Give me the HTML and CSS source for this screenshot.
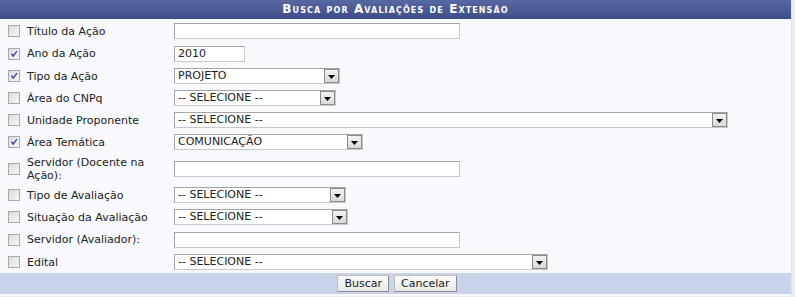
FILE: index.html
```html
<!DOCTYPE html>
<html lang="pt-BR">
<head>
<meta charset="utf-8">
<title>Busca por Avaliações de Extensão</title>
<link rel="stylesheet" href="styles.css">
</head>
<body>
<div class="panel">
  <div class="caption">Busca por Avaliações de Extensão</div>
  <div class="rows">
    <div class="row">
      <span class="cb"></span><span class="lbl">Título da Ação</span>
      <span class="field"><span class="txt w286"></span></span>
    </div>
    <div class="row tall">
      <span class="cb on"><svg viewBox="0 0 12 12"><path d="M3 5.5 L5 8.5 L9.5 2.5" fill="none" stroke="#2b3f9c" stroke-width="1.6"/></svg></span><span class="lbl">Ano da Ação</span>
      <span class="field"><span class="txt w71">2010</span></span>
    </div>
    <div class="row">
      <span class="cb on"><svg viewBox="0 0 12 12"><path d="M3 5.5 L5 8.5 L9.5 2.5" fill="none" stroke="#2b3f9c" stroke-width="1.6"/></svg></span><span class="lbl">Tipo da Ação</span>
      <span class="field"><span class="sel w166"><span class="val">PROJETO</span><span class="arr"><svg viewBox="0 0 7 4"><path d="M0 0H7L3.5 4Z"/></svg></span></span></span>
    </div>
    <div class="row">
      <span class="cb"></span><span class="lbl">Área do CNPq</span>
      <span class="field"><span class="sel w162"><span class="val">-- SELECIONE --</span><span class="arr"><svg viewBox="0 0 7 4"><path d="M0 0H7L3.5 4Z"/></svg></span></span></span>
    </div>
    <div class="row">
      <span class="cb"></span><span class="lbl">Unidade Proponente</span>
      <span class="field"><span class="sel w554"><span class="val">-- SELECIONE --</span><span class="arr"><svg viewBox="0 0 7 4"><path d="M0 0H7L3.5 4Z"/></svg></span></span></span>
    </div>
    <div class="row">
      <span class="cb on"><svg viewBox="0 0 12 12"><path d="M3 5.5 L5 8.5 L9.5 2.5" fill="none" stroke="#2b3f9c" stroke-width="1.6"/></svg></span><span class="lbl">Área Temática</span>
      <span class="field"><span class="sel w189"><span class="val">COMUNICAÇÃO</span><span class="arr"><svg viewBox="0 0 7 4"><path d="M0 0H7L3.5 4Z"/></svg></span></span></span>
    </div>
    <div class="row two">
      <span class="cb"></span><span class="lbl">Servidor (Docente na Ação):</span>
      <span class="field"><span class="txt w286"></span></span>
    </div>
    <div class="row">
      <span class="cb"></span><span class="lbl">Tipo de Avaliação</span>
      <span class="field"><span class="sel w172"><span class="val">-- SELECIONE --</span><span class="arr"><svg viewBox="0 0 7 4"><path d="M0 0H7L3.5 4Z"/></svg></span></span></span>
    </div>
    <div class="row">
      <span class="cb"></span><span class="lbl">Situação da Avaliação</span>
      <span class="field"><span class="sel w174"><span class="val">-- SELECIONE --</span><span class="arr"><svg viewBox="0 0 7 4"><path d="M0 0H7L3.5 4Z"/></svg></span></span></span>
    </div>
    <div class="row tall">
      <span class="cb"></span><span class="lbl">Servidor (Avaliador):</span>
      <span class="field"><span class="txt w286"></span></span>
    </div>
    <div class="row">
      <span class="cb"></span><span class="lbl">Edital</span>
      <span class="field"><span class="sel w374"><span class="val">-- SELECIONE --</span><span class="arr"><svg viewBox="0 0 7 4"><path d="M0 0H7L3.5 4Z"/></svg></span></span></span>
    </div>
  </div>
  <div class="footer">
    <span class="btn">Buscar</span><span class="btn">Cancelar</span>
  </div>
</div>
</body>
</html>
```
FILE: styles.css
```css
* { box-sizing: border-box; }
html, body { margin: 0; padding: 0; }
body {
  background: #eceef2;
  font-family: "DejaVu Sans", Verdana, sans-serif;
  font-size: 11px;
  color: #222;
  width: 795px;
  height: 297px;
  overflow: hidden;
}
.panel {
  width: 792px;
  background: #f8f9fc;
  border-right: 1px solid #e2e4ea;
  padding-bottom: 2px;
}
.caption {
  height: 19px;
  background: linear-gradient(#5768a2, #3d4d87);
  color: #fff;
  font-weight: bold;
  font-variant: small-caps;
  letter-spacing: 1.1px;
  text-align: center;
  line-height: 19px;
  font-size: 12px;
}
.rows {
  padding-top: 1px;
}
.row {
  display: grid;
  grid-template-columns: 19px 147px 1fr;
  align-items: center;
  padding: 3px 0 3px 8px;
  height: 22px;
}
.row.tall { height: 23px; }
.row.two { height: 31px; padding-top: 2px; padding-bottom: 2px; }
.cb {
  width: 12px;
  height: 12px;
  border: 1px solid #a9a9a9;
  background: linear-gradient(135deg, #dcdcdc, #f6f6f6);
  display: block;
}
.cb svg { display: block; width: 10px; height: 10px; }
.lbl { line-height: 13px; }
.field { display: flex; }
.txt {
  display: block;
  height: 16px;
  background: #fff;
  border: 1px solid #a5a5a5;
  border-right-color: #c8c8c8;
  border-bottom-color: #c8c8c8;
  line-height: 14px;
  padding-left: 3px;
}
.sel {
  display: flex;
  align-items: center;
  height: 16px;
  background: #fff;
  border: 1px solid #a5a5a5;
  border-right-color: #c8c8c8;
  border-bottom-color: #c8c8c8;
  padding-left: 3px;
}
.val { flex: 1; line-height: 14px; white-space: nowrap; }
.arr {
  width: 15px;
  height: 14px;
  border: 1px solid #8a8a8a;
  background: linear-gradient(#f2f2f2, #d9d9d9);
  display: flex;
  align-items: center;
  justify-content: center;
}
.arr svg { width: 7px; height: 4px; display: block; margin-top: 2px; }
.w71 { width: 71px; }
.w162 { width: 162px; }
.w166 { width: 166px; }
.w172 { width: 172px; }
.w174 { width: 174px; }
.w189 { width: 189px; }
.w286 { width: 286px; }
.w374 { width: 374px; }
.w554 { width: 554px; }
.footer {
  background: #c9d4eb;
  height: 21px;
  display: flex;
  justify-content: center;
  align-items: center;
  gap: 5px;
  padding-left: 3px;
}
.btn {
  display: block;
  height: 17px;
  line-height: 15px;
  padding: 0 6px;
  border: 1px solid #8d8d8d;
  border-top-color: #bdbdbd;
  border-left-color: #bdbdbd;
  background: linear-gradient(#fbfbfb, #e8e8e8);
  color: #222;
}
```
